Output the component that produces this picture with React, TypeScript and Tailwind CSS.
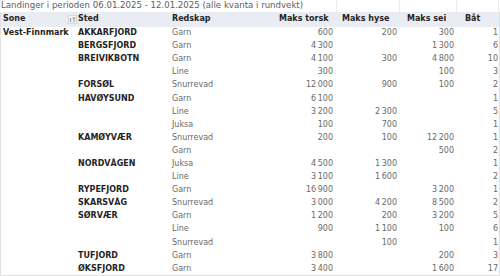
const rows = [
  { sone: "Vest-Finnmark", sted: "AKKARFJORD", redskap: "Garn", torsk: "600", hyse: "200", sei: "300", bat: "1" },
  { sone: "", sted: "BERGSFJORD", redskap: "Garn", torsk: "4 300", hyse: "", sei: "1 300", bat: "6" },
  { sone: "", sted: "BREIVIKBOTN", redskap: "Garn", torsk: "4 100", hyse: "300", sei: "4 800", bat: "10" },
  { sone: "", sted: "", redskap: "Line", torsk: "300", hyse: "", sei: "100", bat: "3" },
  { sone: "", sted: "FORSØL", redskap: "Snurrevad", torsk: "12 000", hyse: "900", sei: "100", bat: "2" },
  { sone: "", sted: "HAVØYSUND", redskap: "Garn", torsk: "6 100", hyse: "", sei: "", bat: "1" },
  { sone: "", sted: "", redskap: "Line", torsk: "3 200", hyse: "2 300", sei: "", bat: "5" },
  { sone: "", sted: "", redskap: "Juksa", torsk: "100", hyse: "700", sei: "", bat: "1" },
  { sone: "", sted: "KAMØYVÆR", redskap: "Snurrevad", torsk: "200", hyse: "100", sei: "12 200", bat: "1" },
  { sone: "", sted: "", redskap: "Garn", torsk: "", hyse: "", sei: "500", bat: "2" },
  { sone: "", sted: "NORDVÅGEN", redskap: "Juksa", torsk: "4 500", hyse: "1 300", sei: "", bat: "1" },
  { sone: "", sted: "", redskap: "Line", torsk: "3 100", hyse: "1 600", sei: "", bat: "2" },
  { sone: "", sted: "RYPEFJORD", redskap: "Garn", torsk: "16 900", hyse: "", sei: "3 200", bat: "1" },
  { sone: "", sted: "SKARSVÅG", redskap: "Snurrevad", torsk: "3 000", hyse: "4 200", sei: "8 500", bat: "2" },
  { sone: "", sted: "SØRVÆR", redskap: "Garn", torsk: "1 200", hyse: "200", sei: "3 200", bat: "5" },
  { sone: "", sted: "", redskap: "Line", torsk: "900", hyse: "1 100", sei: "100", bat: "6" },
  { sone: "", sted: "", redskap: "Snurrevad", torsk: "", hyse: "100", sei: "", bat: "1" },
  { sone: "", sted: "TUFJORD", redskap: "Garn", torsk: "3 800", hyse: "", sei: "200", bat: "3" },
  { sone: "", sted: "ØKSFJORD", redskap: "Garn", torsk: "3 400", hyse: "", sei: "1 600", bat: "17" },
];

// thin space like the report's thousand separator
const num = (v: string) => v.replace(" ", "\u2009");

// 1px left border + 498px of columns + 1px right border = 500
const cols = "grid grid-cols-[67px_9px_93px_102px_64px_63px_57px_43px]";

function SortIcon() {
  return (
    <svg width="9" height="9" viewBox="0 0 9 9" className="mt-[1px]">
      <rect x="0.5" y="0.5" width="8" height="8" fill="#f3f4f7" stroke="#d6d8de" />
      <path d="M2.5 3v4M4.5 3h3M6 3v4" stroke="#8a8886" strokeWidth="0.9" fill="none" />
    </svg>
  );
}

export default function App() {
  return (
    <div className="w-[500px] h-[276px] overflow-hidden bg-white font-['DejaVu_Sans',sans-serif] text-[8px]">
      <div className={`${cols} w-[500px] h-[12px] border-l border-transparent`}>
        <div className="col-span-5 whitespace-nowrap leading-[11px] text-[8.6px] text-[#605e5c]">
          Landinger i perioden 06.01.2025 - 12.01.2025 (alle kvanta i rundvekt)
        </div>
        <div className="border-l border-[#ececec]" />
        <div className="border-l border-[#ececec]" />
        <div className="border-l border-r border-[#ececec]" />
      </div>
      <div className="w-[500px] border-l border-r border-b border-[#e1e1e1]">
        <div className={`${cols} h-[14.5px] items-center bg-[#e9ecf3] font-bold text-[#252423] leading-none`}>
          <div className="pl-[2px]">Sone</div>
          <div className="flex justify-center">
            <SortIcon />
          </div>
          <div className="pl-[1px]">Sted</div>
          <div className="pl-[2px]">Redskap</div>
          <div className="pl-[7px] whitespace-nowrap">Maks torsk</div>
          <div className="pl-[6px] whitespace-nowrap">Maks hyse</div>
          <div className="pl-[8px] whitespace-nowrap">Maks sei</div>
          <div className="pl-[9px]">Båt</div>
        </div>
        {rows.map((r, i) => (
          <div key={i} className={`${cols} h-[13.1px] items-center leading-none`}>
            <div className="col-span-2 pl-[2px] font-bold text-[#252423] whitespace-nowrap">{r.sone}</div>
            <div className="pl-[1px] font-bold text-[#252423] whitespace-nowrap">{r.sted}</div>
            <div className="pl-[2px] text-[#6b6967]">{r.redskap}</div>
            <div className="pr-[3px] text-right text-[#6b6967]">{num(r.torsk)}</div>
            <div className="pr-[2px] text-right text-[#6b6967]">{num(r.hyse)}</div>
            <div className="pr-[2px] text-right text-[#6b6967]">{num(r.sei)}</div>
            <div className="pr-[1px] text-right text-[#6b6967]">{r.bat}</div>
          </div>
        ))}
      </div>
    </div>
  );
}
